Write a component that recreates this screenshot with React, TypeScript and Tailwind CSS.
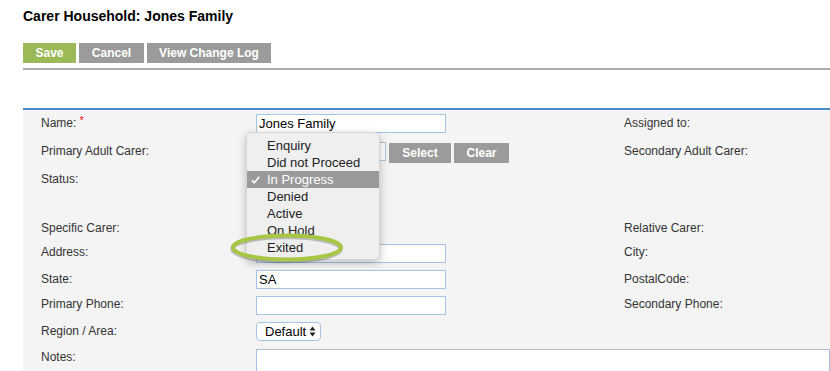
import React from "react";

const inputCls =
  "h-[19px] border border-[#a3c4e4] bg-white px-[2px] text-[13px] leading-[17px] text-black";

function Row({
  h,
  left,
  mid,
  right,
}: {
  h: number;
  left?: React.ReactNode;
  mid?: React.ReactNode;
  right?: React.ReactNode;
}) {
  return (
    <div className="grid grid-cols-[215px_368px_1fr]" style={{ height: h }}>
      <div className="text-[12px] leading-[20px] text-[#333]">{left}</div>
      <div>{mid}</div>
      <div className="text-[12px] leading-[20px] text-[#333]">{right}</div>
    </div>
  );
}

export default function App() {
  const items = ["Enquiry", "Did not Proceed", "In Progress", "Denied", "Active", "On Hold", "Exited"];
  return (
    <div className="relative h-[371px] w-[830px] overflow-hidden bg-white font-['Liberation_Sans',Arial,sans-serif]">
      <div className="pl-[23px]">
        <h1 className="pt-[8px] text-[14px] font-bold leading-[16px] text-black">
          Carer Household: Jones Family
        </h1>
        <div className="mt-[19px] flex gap-[3px]">
          <button className="h-[20px] w-[53px] bg-[#9cb958] text-[12px] font-bold text-white">Save</button>
          <button className="h-[20px] w-[65px] bg-[#9b9b9b] text-[12px] font-bold text-white">Cancel</button>
          <button className="h-[20px] w-[124px] bg-[#9b9b9b] text-[12px] font-bold text-white">View Change Log</button>
        </div>
        <div className="mt-[5px] h-[2px] bg-[#ababab]" />
        <div className="mt-[38px] border-t-2 border-[#4b88c9] bg-[#f4f4f4] pl-[18px] pt-[3px]">
          <Row
            h={28}
            left={
              <span>
                Name: <span className="relative top-[-3px] text-[10px] text-[#e00]">*</span>
              </span>
            }
            mid={<div className={`mt-px w-[190px] ${inputCls}`}>Jones Family</div>}
            right="Assigned to:"
          />
          <Row
            h={28}
            left="Primary Adult Carer:"
            mid={
              <div className="flex items-start gap-[3px]">
                <div className={`mt-px w-[130px] ${inputCls}`} />
                <button className="mt-[2px] h-[20px] w-[62px] bg-[#9b9b9b] text-[12px] font-bold text-white">Select</button>
                <button className="mt-[2px] h-[20px] w-[55px] bg-[#9b9b9b] text-[12px] font-bold text-white">Clear</button>
              </div>
            }
            right="Secondary Adult Carer:"
          />
          <Row h={49} left="Status:" />
          <Row h={24} left="Specific Carer:" right="Relative Carer:" />
          <Row
            h={27}
            left="Address:"
            mid={<div className={`mt-[2px] w-[190px] ${inputCls}`} />}
            right="City:"
          />
          <Row
            h={25}
            left="State:"
            mid={<div className={`mt-px w-[190px] ${inputCls}`}>SA</div>}
            right="PostalCode:"
          />
          <Row
            h={27}
            left="Primary Phone:"
            mid={<div className={`mt-[2px] w-[190px] ${inputCls}`} />}
            right="Secondary Phone:"
          />
          <Row
            h={26}
            left="Region / Area:"
            mid={
              <div className="mt-px flex h-[19px] w-[65px] items-center justify-between rounded-[4px] border border-[#a3c4e4] bg-white pl-[8px] pr-[4px] text-[13px] text-black">
                <span>Default</span>
                <svg width="7" height="11" viewBox="0 0 7 11">
                  <path d="M3.5 0.5 L6.5 4.5 H0.5 Z" fill="#222" />
                  <path d="M3.5 10.5 L6.5 6.5 H0.5 Z" fill="#222" />
                </svg>
              </div>
            }
          />
          <div className="grid h-[40px] grid-cols-[215px_1fr]">
            <div className="text-[12px] leading-[20px] text-[#333]">Notes:</div>
            <div className="mt-[2px] h-[40px] border border-[#a3c4e4] border-t-[#b0bdca] bg-white" />
          </div>
        </div>
      </div>

      {/* dropdown menu */}
      <div className="absolute left-[246px] top-[132px] h-[128px] w-[134px] rounded-[5px] border border-[#d6d6d6] bg-[#efefef] pt-[4px] shadow-[0_3px_8px_rgba(0,0,0,0.25)]">
        {items.map((t) => {
          const sel = t === "In Progress";
          return (
            <div
              key={t}
              className={`relative h-[17px] pl-[20px] text-[13px] leading-[17px] ${
                sel ? "bg-[#9a9a9a] text-white" : "text-[#222]"
              }`}
            >
              {sel && (
                <svg className="absolute left-[4px] top-[5px]" width="9" height="8" viewBox="0 0 9 8">
                  <path d="M0.8 4.2 L3.3 6.8 L8.2 0.8" fill="none" stroke="#fff" strokeWidth="1.5" />
                </svg>
              )}
              {t}
            </div>
          );
        })}
      </div>

      {/* highlight ellipse */}
      <svg className="absolute left-[228px] top-[231px]" width="118" height="34" viewBox="0 0 118 34">
        <ellipse cx="58.5" cy="18" rx="54" ry="12" fill="none" stroke="rgba(0,0,0,0.22)" strokeWidth="4.5" />
        <ellipse cx="59" cy="16.5" rx="54" ry="12" fill="none" stroke="#a6c644" strokeWidth="4" />
      </svg>
    </div>
  );
}
